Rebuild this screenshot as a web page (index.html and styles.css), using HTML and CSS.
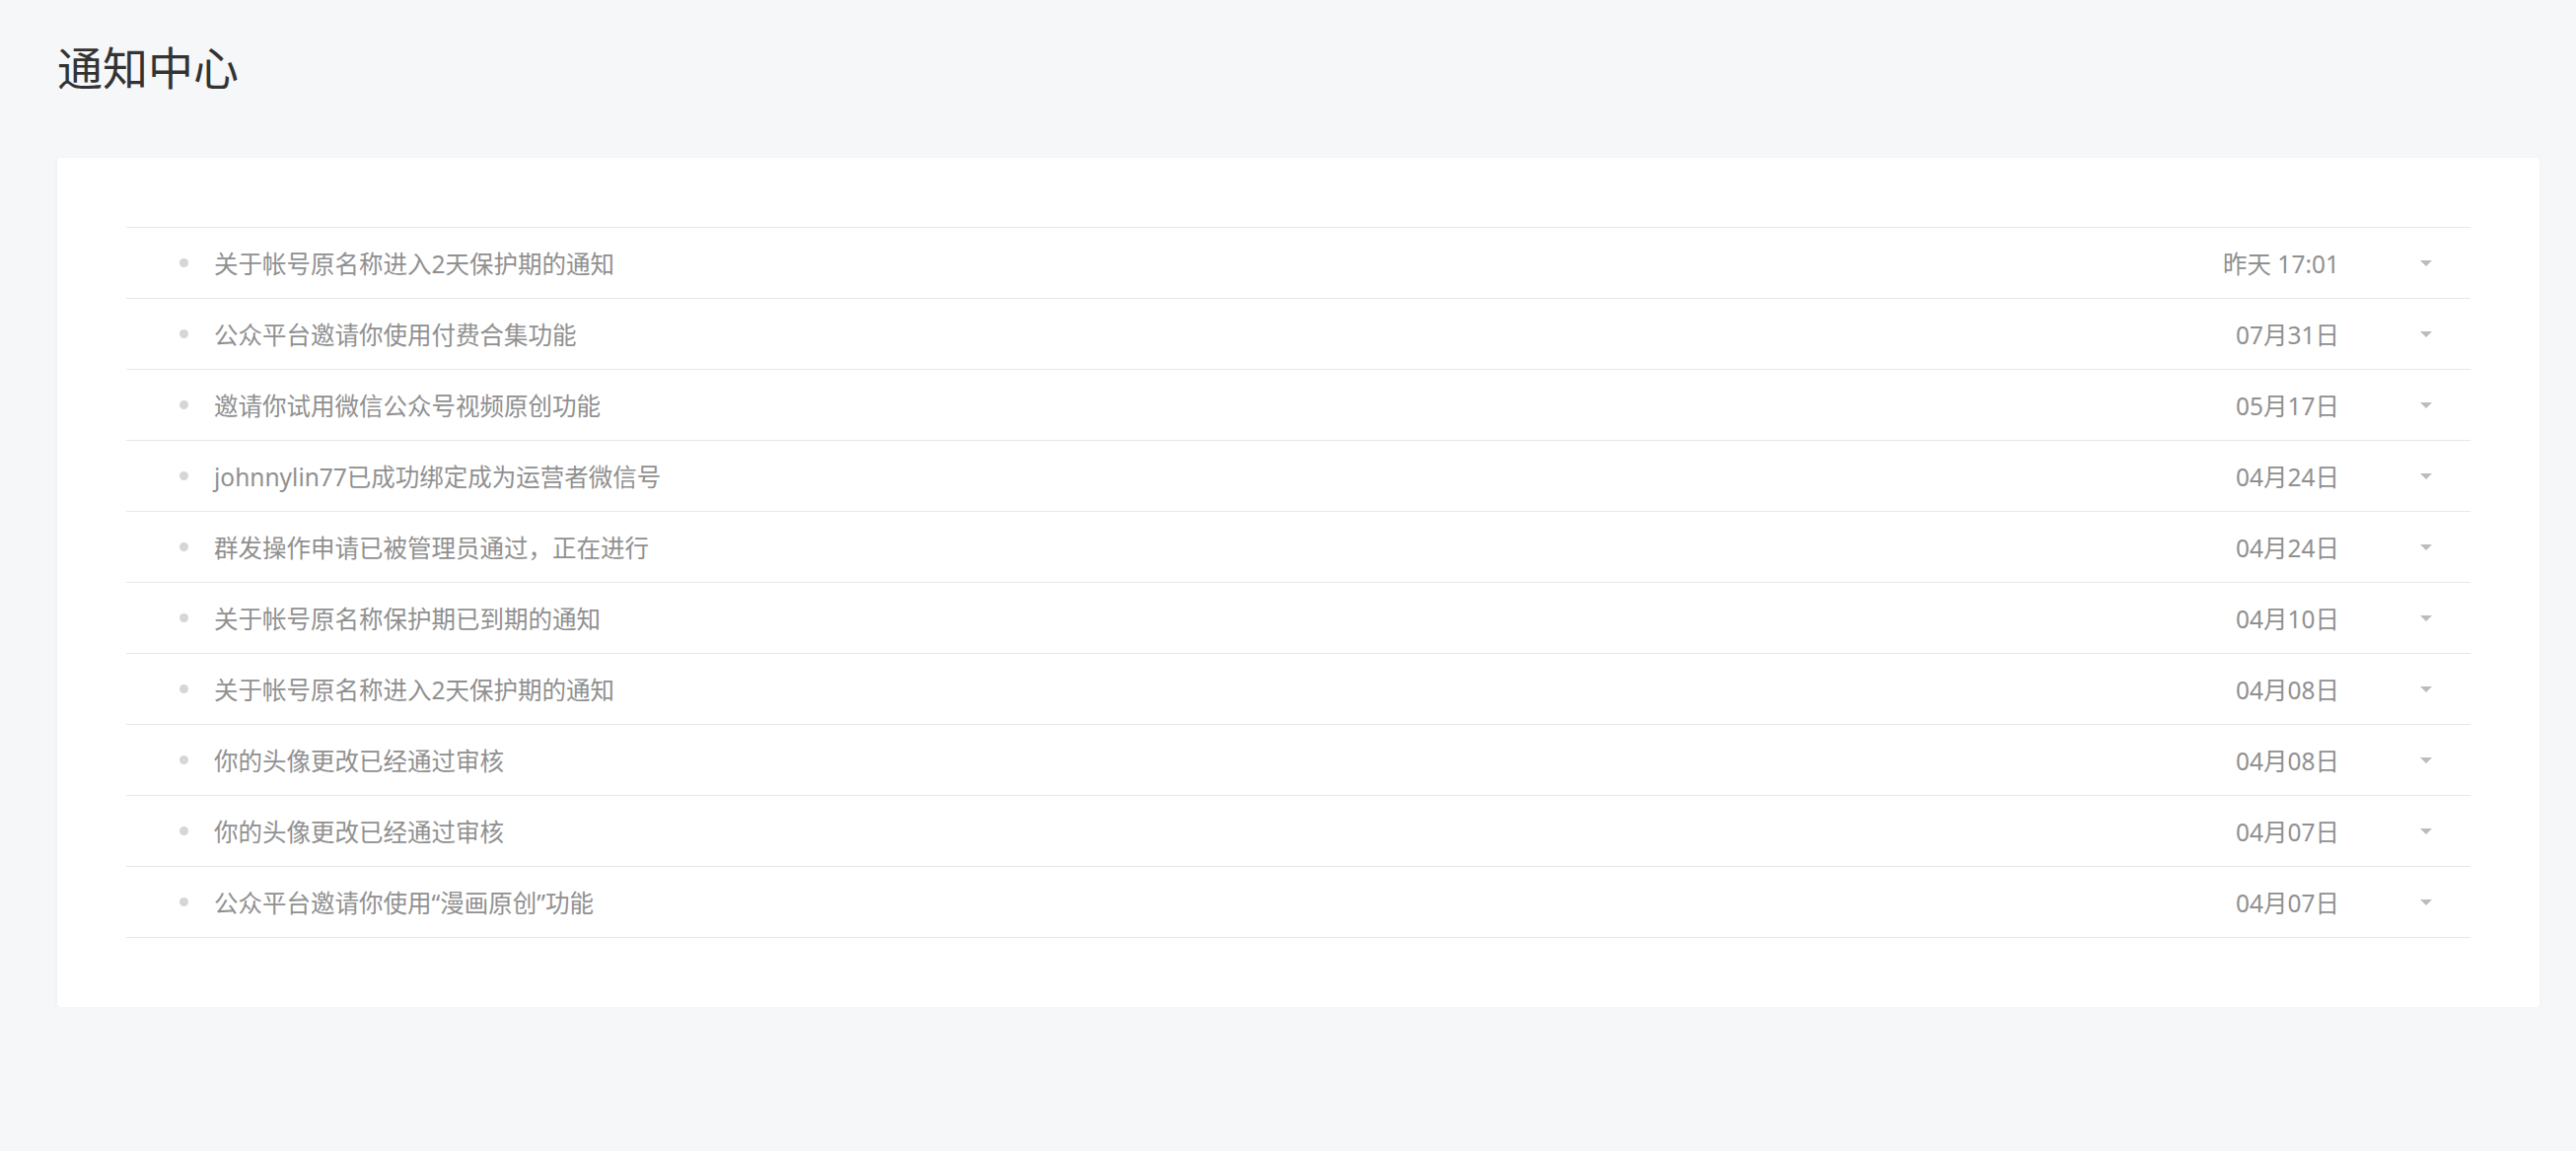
FILE: index.html
```html
<!DOCTYPE html>
<html lang="zh-CN">
<head>
<meta charset="utf-8">
<title>通知中心</title>
<link rel="stylesheet" href="styles.css">
</head>
<body>
<div class="page">
  <h1 class="title">通知中心</h1>
  <div class="card">
    <ul class="list">
      <li class="row"><span class="dot"></span><span class="text">关于帐号原名称进入2天保护期的通知</span><span class="date">昨天 17:01</span><span class="arrow"></span></li>
      <li class="row"><span class="dot"></span><span class="text">公众平台邀请你使用付费合集功能</span><span class="date">07月31日</span><span class="arrow"></span></li>
      <li class="row"><span class="dot"></span><span class="text">邀请你试用微信公众号视频原创功能</span><span class="date">05月17日</span><span class="arrow"></span></li>
      <li class="row"><span class="dot"></span><span class="text">johnnylin77已成功绑定成为运营者微信号</span><span class="date">04月24日</span><span class="arrow"></span></li>
      <li class="row"><span class="dot"></span><span class="text">群发操作申请已被管理员通过，正在进行</span><span class="date">04月24日</span><span class="arrow"></span></li>
      <li class="row"><span class="dot"></span><span class="text">关于帐号原名称保护期已到期的通知</span><span class="date">04月10日</span><span class="arrow"></span></li>
      <li class="row"><span class="dot"></span><span class="text">关于帐号原名称进入2天保护期的通知</span><span class="date">04月08日</span><span class="arrow"></span></li>
      <li class="row"><span class="dot"></span><span class="text">你的头像更改已经通过审核</span><span class="date">04月08日</span><span class="arrow"></span></li>
      <li class="row"><span class="dot"></span><span class="text">你的头像更改已经通过审核</span><span class="date">04月07日</span><span class="arrow"></span></li>
      <li class="row"><span class="dot"></span><span class="text">公众平台邀请你使用“漫画原创”功能</span><span class="date">04月07日</span><span class="arrow"></span></li>
    </ul>
  </div>
</div>
</body>
</html>
```
FILE: styles.css
```css
html, body {
  margin: 0;
  padding: 0;
  background: #f6f7f9;
  font-family: "Noto Sans", "Noto Sans CJK SC", sans-serif;
}
.page {
  padding: 36px 37px 0 58px;
}
.title {
  margin: 0;
  font-size: 46px;
  line-height: 64px;
  font-weight: 400;
  color: #333;
}
.card {
  margin-top: 60px;
  background: #fff;
  border-radius: 4px;
  box-shadow: 0 2px 6px rgba(0, 0, 0, 0.04);
  padding: 70px;
}
.list {
  list-style: none;
  margin: 0;
  padding: 0;
  border-top: 1px solid #e7e7e7;
}
.row {
  box-sizing: border-box;
  height: 72px;
  display: flex;
  align-items: center;
  border-bottom: 1px solid #e7e7e7;
  padding-left: 54px;
  padding-right: 39px;
  font-size: 24.5px;
  color: #909090;
}
.dot {
  width: 9px;
  height: 9px;
  border-radius: 50%;
  background: #d6d6d6;
  flex: none;
}
.text {
  margin-left: 26px;
  flex: 1;
}
.date {
  flex: none;
}
.arrow {
  flex: none;
  margin-left: 82px;
  width: 0;
  height: 0;
  border-left: 6px solid transparent;
  border-right: 6px solid transparent;
  border-top: 6px solid #bcbcbc;
}
```
